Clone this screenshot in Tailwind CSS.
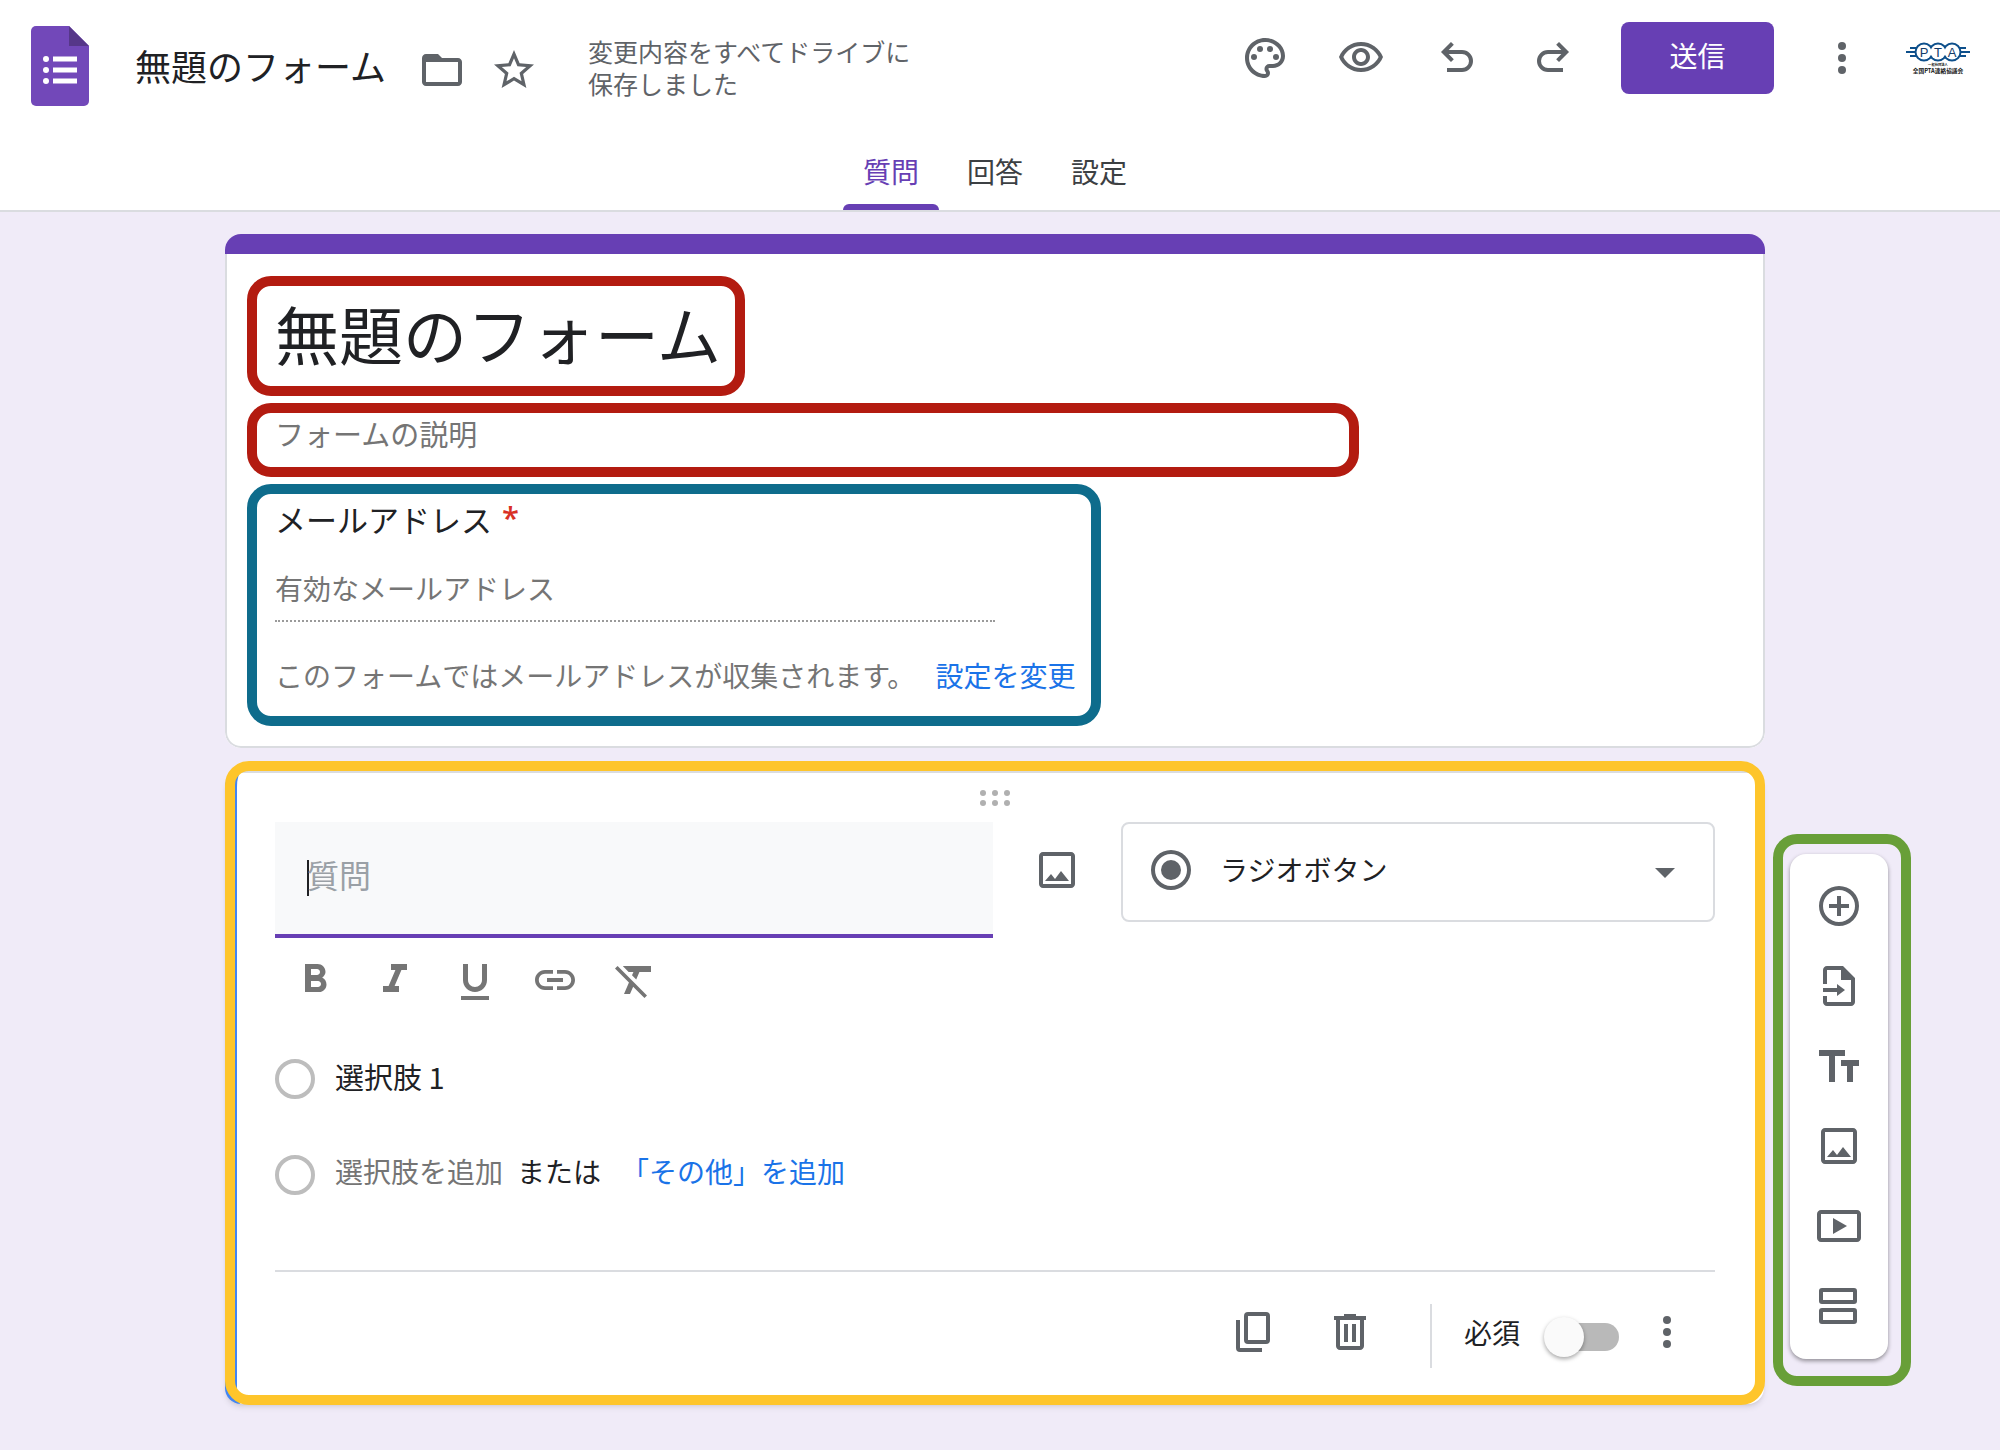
<!DOCTYPE html>
<html lang="ja">
<head>
<meta charset="utf-8">
<meta name="viewport" content="width=device-width, initial-scale=1">
<title>無題のフォーム</title>
<script src="https://cdn.jsdelivr.net/npm/@tailwindcss/browser@4"></script>
</head>
<body class="min-h-screen bg-[#f0ebf8] font-['Noto_Sans_CJK_JP',sans-serif] text-[28px] leading-10 text-[#202124]">

<!-- App bar -->
<header class="border-b-2 border-[#dadce0] bg-white">
  <div class="flex h-[132px] items-center pl-[31px] pr-[30px]">
    <svg class="h-20 w-[58px] shrink-0" viewBox="0 0 58 80" aria-hidden="true">
      <path fill="#7248b9" d="M5 0h33l20 20v55a5 5 0 0 1-5 5H5a5 5 0 0 1-5-5V5a5 5 0 0 1 5-5z"/>
      <path fill="#563789" d="M38 0l20 20H38z"/>
      <g fill="#fff"><circle cx="15" cy="33" r="3"/><circle cx="15" cy="44" r="3"/><circle cx="15" cy="55" r="3"/><path d="M22 30.500h24v5H22zM22 41.500h24v5H22zM22 52.500h24v5H22z"/></g>
    </svg>
    <h1 class="ml-[46px] whitespace-nowrap pb-0.5 text-[36px] leading-12">無題のフォーム</h1>
    <button type="button" aria-label="フォルダに移動" class="ml-8 mt-2 text-[#5f6368]">
      <svg class="size-12" viewBox="0 0 24 24" fill="currentColor"><path d="M9.170 6l2 2H20v10H4V6h5.170M10 4H4c-1.100 0-1.990.900-1.990 2L2 18c0 1.100.900 2 2 2h16c1.100 0 2-.900 2-2V8c0-1.100-.900-2-2-2h-8l-2-2z"/><path d="M3 5h7l2 2v1H3z"/></svg>
    </button>
    <button type="button" aria-label="スターを付ける" class="ml-6 mt-2 text-[#5f6368]">
      <svg class="size-12" viewBox="0 0 24 24" fill="currentColor"><path d="M22 9.240l-7.190-.620L12 2 9.190 8.630 2 9.240l5.460 4.730L5.820 21 12 17.270 18.180 21l-1.630-7.030L22 9.240zM12 15.400l-3.760 2.270 1-4.280-3.320-2.880 4.380-.380L12 6.100l1.710 4.040 4.380.380-3.320 2.880 1 4.280L12 15.400z"/></svg>
    </button>
    <p class="ml-[50px] mt-0.5 whitespace-nowrap text-[25px] leading-8 text-[#5f6368]">変更内容をすべてドライブに<br>保存しました</p>

    <div class="ml-auto flex h-[116px] items-center self-start text-[#5f6368]">
      <div class="flex gap-12">
        <button type="button" aria-label="テーマをカスタマイズ"><svg class="size-12" viewBox="0 0 24 24" fill="currentColor"><path d="M12 22C6.490 22 2 17.510 2 12S6.490 2 12 2s10 4.040 10 9c0 3.310-2.690 6-6 6h-1.770c-.280 0-.500.220-.500.500 0 .120.050.230.130.330.410.470.640 1.060.640 1.670A2.500 2.500 0 0 1 12 22zm0-18c-4.410 0-8 3.590-8 8s3.590 8 8 8c.280 0 .500-.220.500-.500a.540.540 0 0 0-.140-.350c-.410-.460-.630-1.050-.630-1.650a2.500 2.500 0 0 1 2.500-2.500H16c2.210 0 4-1.790 4-4 0-3.860-3.590-7-8-7z"/><circle cx="6.500" cy="11.500" r="1.500"/><circle cx="9.500" cy="7.500" r="1.500"/><circle cx="14.500" cy="7.500" r="1.500"/><circle cx="17.500" cy="11.500" r="1.500"/></svg></button>
        <button type="button" aria-label="プレビュー"><svg class="size-12" viewBox="0 0 24 24" fill="currentColor"><path d="M12 6c3.790 0 7.170 2.130 8.820 5.500C19.170 14.870 15.790 17 12 17s-7.170-2.130-8.820-5.500C4.830 8.130 8.210 6 12 6m0-2C7 4 2.730 7.110 1 11.500 2.730 15.890 7 19 12 19s9.270-3.110 11-7.500C21.270 7.110 17 4 12 4zm0 5c1.380 0 2.500 1.120 2.500 2.500S13.380 14 12 14s-2.500-1.120-2.500-2.500S10.620 9 12 9m0-2c-2.480 0-4.500 2.020-4.500 4.500S9.520 16 12 16s4.500-2.020 4.500-4.500S14.480 7 12 7z"/></svg></button>
        <button type="button" aria-label="元に戻す"><svg class="size-12" viewBox="0 0 24 24" fill="none" stroke="currentColor" stroke-width="2"><path d="M9.700 4.700L5.400 9l4.300 4.300M5.400 9H14.500a4.500 4.500 0 0 1 0 9H7"/></svg></button>
        <button type="button" aria-label="やり直し"><svg class="size-12" viewBox="0 0 24 24" fill="none" stroke="currentColor" stroke-width="2"><path d="M14.300 4.700L18.600 9l-4.300 4.300M18.600 9H9.500a4.500 4.500 0 0 0 0 9H17"/></svg></button>
      </div>
      <button type="button" class="ml-11 h-18 w-[153px] rounded-lg bg-[#673fb4] pb-1.5 text-white">送信</button>
      <button type="button" aria-label="その他" class="ml-11"><svg class="size-12" viewBox="0 0 24 24" fill="currentColor"><circle cx="12" cy="6" r="2"/><circle cx="12" cy="12" r="2"/><circle cx="12" cy="18" r="2"/></svg></button>
      <button type="button" aria-label="アカウント" class="ml-10">
        <svg class="size-16" viewBox="0 0 64 64">
          <path d="M4 22h56M0 26h64M4 30h56" stroke="#0d4f8b" stroke-width="2" fill="none"/>
          <g stroke="#0d4f8b" stroke-width="4"><circle cx="18" cy="26" r="7.500"/><circle cx="46" cy="26" r="7.500"/><circle cx="32" cy="26" r="7.500"/></g>
          <g fill="#fff"><circle cx="18" cy="26" r="7.500"/><circle cx="46" cy="26" r="7.500"/><circle cx="32" cy="26" r="7.500"/></g>
          <g fill="#123c6b" font-family="Liberation Sans" font-size="13" text-anchor="middle"><text x="18" y="31">P</text><text x="32" y="31">T</text><text x="46" y="31">A</text></g>
          <g fill="#111" font-family="Noto Sans CJK JP" font-weight="700" text-anchor="middle"><text x="32" y="40" font-size="3.300">一般社団法人</text><text x="32" y="47" font-size="5.700">全国PTA連絡協議会</text></g>
        </svg>
      </button>
    </div>
  </div>
  <nav class="flex h-[78px] justify-center gap-2 pr-[10px]">
    <button type="button" class="relative w-24 text-[#673fb4]">質問<span class="absolute inset-x-0 bottom-0 h-1.5 rounded-t-md bg-[#673fb4]"></span></button>
    <button type="button" class="w-24 text-[#3c4043]">回答</button>
    <button type="button" class="w-24 text-[#3c4043]">設定</button>
  </nav>
</header>

<main class="pb-10 pl-[225px] pr-28 pt-[22px]">

  <!-- Form heading -->
  <section class="mr-[123px] overflow-hidden rounded-2xl bg-white">
    <div class="h-5 bg-[#673fb4]"></div>
    <div class="flex flex-col items-start gap-[7px] rounded-b-2xl border-2 border-t-0 border-[#dadce0] px-5 pb-5 pt-[22px]">
      <div class="rounded-3xl border-10 border-[#b31b10] pl-[18px] pr-3">
        <input type="text" aria-label="フォームのタイトル" value="無題のフォーム" class="block h-25 w-[448px] pb-2 text-[64px] leading-[84px] outline-none">
      </div>
      <div class="w-full max-w-[1112px] rounded-3xl border-10 border-[#b31b10] px-[18px]">
        <input type="text" aria-label="フォームの説明" placeholder="フォームの説明" class="block h-[54px] w-full pb-3.5 text-[29px] outline-none placeholder:text-[#757575]">
      </div>
      <div class="rounded-3xl border-10 border-[#0e6c8c] pb-[21px] pl-[18px] pr-4 pt-[7px]">
        <label for="email" class="flex h-9 text-[31px] leading-9">メールアドレス<span class="ml-2.5 font-['Open_Sans'] leading-8 font-semibold text-[#d93025]">*</span></label>
        <input id="email" type="email" placeholder="有効なメールアドレス" class="mt-[30px] block h-[55px] w-180 border-b-2 border-dotted border-[#9a9a9a] pb-3 outline-none placeholder:text-[#757575]">
        <p class="mt-[33px] flex gap-5 whitespace-nowrap text-[#757575]">このフォームではメールアドレスが収集されます。<a href="#settings" class="text-[#1a73e8]">設定を変更</a></p>
      </div>
    </div>
  </section>

  <div class="mt-[23px] flex items-start">
    <!-- Question editor -->
    <section class="relative min-w-0 flex-1 rounded-2xl border-l-12 border-t-2 border-l-[#4285f4] border-t-[#dadce0] bg-white pb-[34px] pl-[38px] pr-[49px] pt-[17px] shadow-md">
      <div class="pointer-events-none absolute -bottom-px -left-3 -right-px -top-3 rounded-3xl border-10 border-[#fec52b]"></div>
      <svg class="mx-auto h-4 w-[30px]" viewBox="0 0 30 16" fill="#b0b0b0" aria-hidden="true"><circle cx="3" cy="3" r="3"/><circle cx="15" cy="3" r="3"/><circle cx="27" cy="3" r="3"/><circle cx="3" cy="13" r="3"/><circle cx="15" cy="13" r="3"/><circle cx="27" cy="13" r="3"/></svg>

      <div class="mt-4 grid grid-cols-[718fr_48px_594fr] items-start gap-10">
        <div class="flex h-29 items-center border-b-4 border-[#673fb4] bg-[#f8f9fa] px-8">
          <span class="-mr-0.5 h-9 w-0.5 bg-[#202124]"></span>
          <input type="text" aria-label="質問" placeholder="質問" class="h-25 w-full pb-2 text-[32px] outline-none placeholder:text-[#9aa0a6]">
        </div>
        <button type="button" aria-label="画像を追加" class="mt-6 text-[#5f6368]"><svg class="size-12" viewBox="0 0 24 24" fill="currentColor"><path d="M19 5v14H5V5h14m0-2H5c-1.100 0-2 .900-2 2v14c0 1.100.900 2 2 2h14c1.100 0 2-.900 2-2V5c0-1.100-.900-2-2-2z"/><path d="M14 12.500l-3 4-2-2.500-3 3.500h12z"/></svg></button>
        <div class="relative text-[#5f6368]">
          <select aria-label="質問の種類" class="h-25 w-full appearance-none rounded-lg border-2 border-[#dadce0] bg-white pb-1.5 pl-[97px] text-[#202124] outline-none"><option>ラジオボタン</option></select>
          <svg class="pointer-events-none absolute left-[26px] top-6 size-12" viewBox="0 0 24 24" fill="currentColor"><path d="M12 2a10 10 0 1 0 0 20 10 10 0 0 0 0-20zm0 18a8 8 0 1 1 0-16 8 8 0 0 1 0 16z"/><circle cx="12" cy="12" r="5"/></svg>
          <svg class="pointer-events-none absolute right-[26px] top-[26px] size-12" viewBox="0 0 24 24" fill="currentColor"><path d="M7 10l5 5 5-5z"/></svg>
        </div>
      </div>

      <div class="mt-[18px] flex gap-8 pl-4 text-[#757575]">
        <button type="button" aria-label="太字"><svg class="size-12" viewBox="0 0 24 24" fill="currentColor"><path d="M15.600 10.790c.970-.670 1.650-1.770 1.650-2.790 0-2.260-1.750-4-4-4H7v14h7.040c2.090 0 3.710-1.700 3.710-3.790 0-1.520-.860-2.820-2.150-3.420zM10 6.500h3c.830 0 1.500.670 1.500 1.500s-.670 1.500-1.500 1.500h-3v-3zm3.500 9H10v-3h3.500c.830 0 1.500.670 1.500 1.500s-.670 1.500-1.500 1.500z"/></svg></button>
        <button type="button" aria-label="斜体"><svg class="size-12" viewBox="0 0 24 24" fill="currentColor"><path d="M10 4v3h2.210l-3.420 8H6v3h8v-3h-2.210l3.420-8H18V4z"/></svg></button>
        <button type="button" aria-label="下線"><svg class="size-12" viewBox="0 -1 24 24" fill="currentColor"><path d="M12 17c3.310 0 6-2.690 6-6V3h-2.500v8c0 1.930-1.570 3.500-3.500 3.500S8.500 12.930 8.500 11V3H6v8c0 3.310 2.690 6 6 6zm-7 2v2h14v-2H5z"/></svg></button>
        <button type="button" aria-label="リンクを挿入"><svg class="size-12" viewBox="0 0 24 24" fill="currentColor"><path d="M3.900 12c0-1.710 1.390-3.100 3.100-3.100h4V7H7c-2.760 0-5 2.240-5 5s2.240 5 5 5h4v-1.900H7c-1.710 0-3.100-1.390-3.100-3.100zM8 13h8v-2H8v2zm9-6h-4v1.900h4c1.710 0 3.100 1.390 3.100 3.100s-1.390 3.100-3.100 3.100h-4V17h4c2.760 0 5-2.240 5-5s-2.240-5-5-5z"/></svg></button>
        <button type="button" aria-label="書式をクリア"><svg class="size-12" viewBox="0 0 24 24" fill="currentColor"><path d="M3.270 5L2 6.270l6.970 6.970L6.500 19h3l1.570-3.660L16.730 21 18 19.730 3.550 5.270 3.270 5zM6 5v.180L8.820 8h2.400l-.720 1.680 2.100 2.100L14.210 8H20V5H6z"/></svg></button>
      </div>

      <div class="mt-[55px] flex h-10 items-center gap-5">
        <input id="opt1" type="radio" name="opt" class="size-10 appearance-none rounded-full border-4 border-[#bdbdbd]">
        <label for="opt1" class="pb-1.5 text-[29px]">選択肢 1</label>
      </div>
      <div class="mt-14 flex h-10 items-center">
        <input id="opt2" type="radio" name="opt" class="size-10 appearance-none rounded-full border-4 border-[#bdbdbd]">
        <label for="opt2" class="ml-5 pb-2 text-[#757575]">選択肢を追加</label>
        <span class="ml-3.5 pb-2">または</span>
        <a href="#other" class="ml-5 pb-2 text-[#1a73e8]">「その他」を追加</a>
      </div>

      <div class="mt-[75px] flex items-start justify-end border-t-2 border-[#dadce0] pr-6 pt-8 text-[#5f6368]">
        <button type="button" aria-label="コピーを作成" class="flex h-14 items-center"><svg class="size-12" viewBox="0 0 24 24" fill="none" stroke="currentColor" stroke-width="2"><rect x="8" y="3" width="11" height="14" rx="1"/><path d="M4 6v14a1 1 0 0 0 1 1h11"/></svg></button>
        <button type="button" aria-label="削除" class="ml-12 flex h-14 items-center"><svg class="size-12" viewBox="0 0 24 24" fill="currentColor"><path d="M15 4V3H9v1H4v2h1v13c0 1.100.900 2 2 2h10c1.100 0 2-.900 2-2V6h1V4h-5zm2 15H7V6h10v13zM9 8h2v9H9zm4 0h2v9h-2z"/></svg></button>
        <span class="ml-14 h-16 w-0.5 bg-[#dadce0]"></span>
        <label for="required" class="ml-8 flex h-14 items-center text-[#202124]">必須</label>
        <span class="ml-[27px] flex h-[66px] items-center">
          <input id="required" type="checkbox" role="switch" class="relative h-7 w-18 appearance-none rounded-full bg-[#b9b9b9] before:absolute before:-left-[3px] before:-top-1.5 before:size-10 before:rounded-full before:bg-[#fafafa] before:shadow-[0_2px_4px_rgba(0,0,0,0.35)]">
        </span>
        <button type="button" aria-label="その他のオプション" class="ml-6 flex h-14 items-center"><svg class="size-12" viewBox="0 0 24 24" fill="currentColor"><circle cx="12" cy="6" r="2"/><circle cx="12" cy="12" r="2"/><circle cx="12" cy="18" r="2"/></svg></button>
      </div>
    </section>

    <!-- Floating insert toolbar -->
    <aside class="relative ml-[26px] mt-[83px] flex w-[98px] shrink-0 flex-col items-center gap-8 rounded-2xl bg-white pb-[29px] pt-7 text-[#5f6368] shadow-[0_2px_4px_rgba(0,0,0,0.4)]">
      <div class="pointer-events-none absolute -bottom-[27px] -left-[17px] -right-[23px] -top-5 rounded-3xl border-10 border-[#689f38]"></div>
      <button type="button" aria-label="質問を追加"><svg class="size-12" viewBox="0 0 24 24" fill="currentColor"><path d="M13 7h-2v4H7v2h4v4h2v-4h4v-2h-4V7zm-1-5a10 10 0 1 0 0 20 10 10 0 0 0 0-20zm0 18a8 8 0 1 1 0-16 8 8 0 0 1 0 16z"/></svg></button>
      <button type="button" aria-label="質問をインポート"><svg class="size-12" viewBox="0 0 24 24" fill="currentColor"><path d="M14 2H6c-1.100 0-2 .900-2 2v7h2V4h7v5h5v11H6v-3H4v3c0 1.100.900 2 2 2h12c1.100 0 2-.900 2-2V8l-6-6z"/><path d="M4 13h7v-2l4 3-4 3v-2H4z"/></svg></button>
      <button type="button" aria-label="タイトルと説明を追加"><svg class="size-12" viewBox="0 0 24 24" fill="currentColor"><path d="M2 4v3h5v13h3V7h5V4H2zM13 9v3h3v8h3v-8h3V9z"/></svg></button>
      <button type="button" aria-label="画像を挿入"><svg class="size-12" viewBox="0 0 24 24" fill="currentColor"><path d="M19 5v14H5V5h14m0-2H5c-1.100 0-2 .900-2 2v14c0 1.100.900 2 2 2h14c1.100 0 2-.900 2-2V5c0-1.100-.900-2-2-2z"/><path d="M14 12.500l-3 4-2-2.500-3 3.500h12z"/></svg></button>
      <button type="button" aria-label="動画を追加"><svg class="size-12" viewBox="0 0 24 24" fill="currentColor"><path d="M21 4H3c-1.100 0-2 .900-2 2v12c0 1.100.900 2 2 2h18c1.100 0 2-.900 2-2V6c0-1.100-.900-2-2-2zm0 14H3V6h18v12zM9 8v8l7-4z"/></svg></button>
      <button type="button" aria-label="セクションを追加"><svg class="size-12" viewBox="0 0 24 24" fill="none" stroke="currentColor" stroke-width="2"><rect x="3" y="4" width="17" height="6" rx=".5"/><rect x="3" y="14" width="17" height="6" rx=".5"/></svg></button>
    </aside>
  </div>
</main>
</body>
</html>
